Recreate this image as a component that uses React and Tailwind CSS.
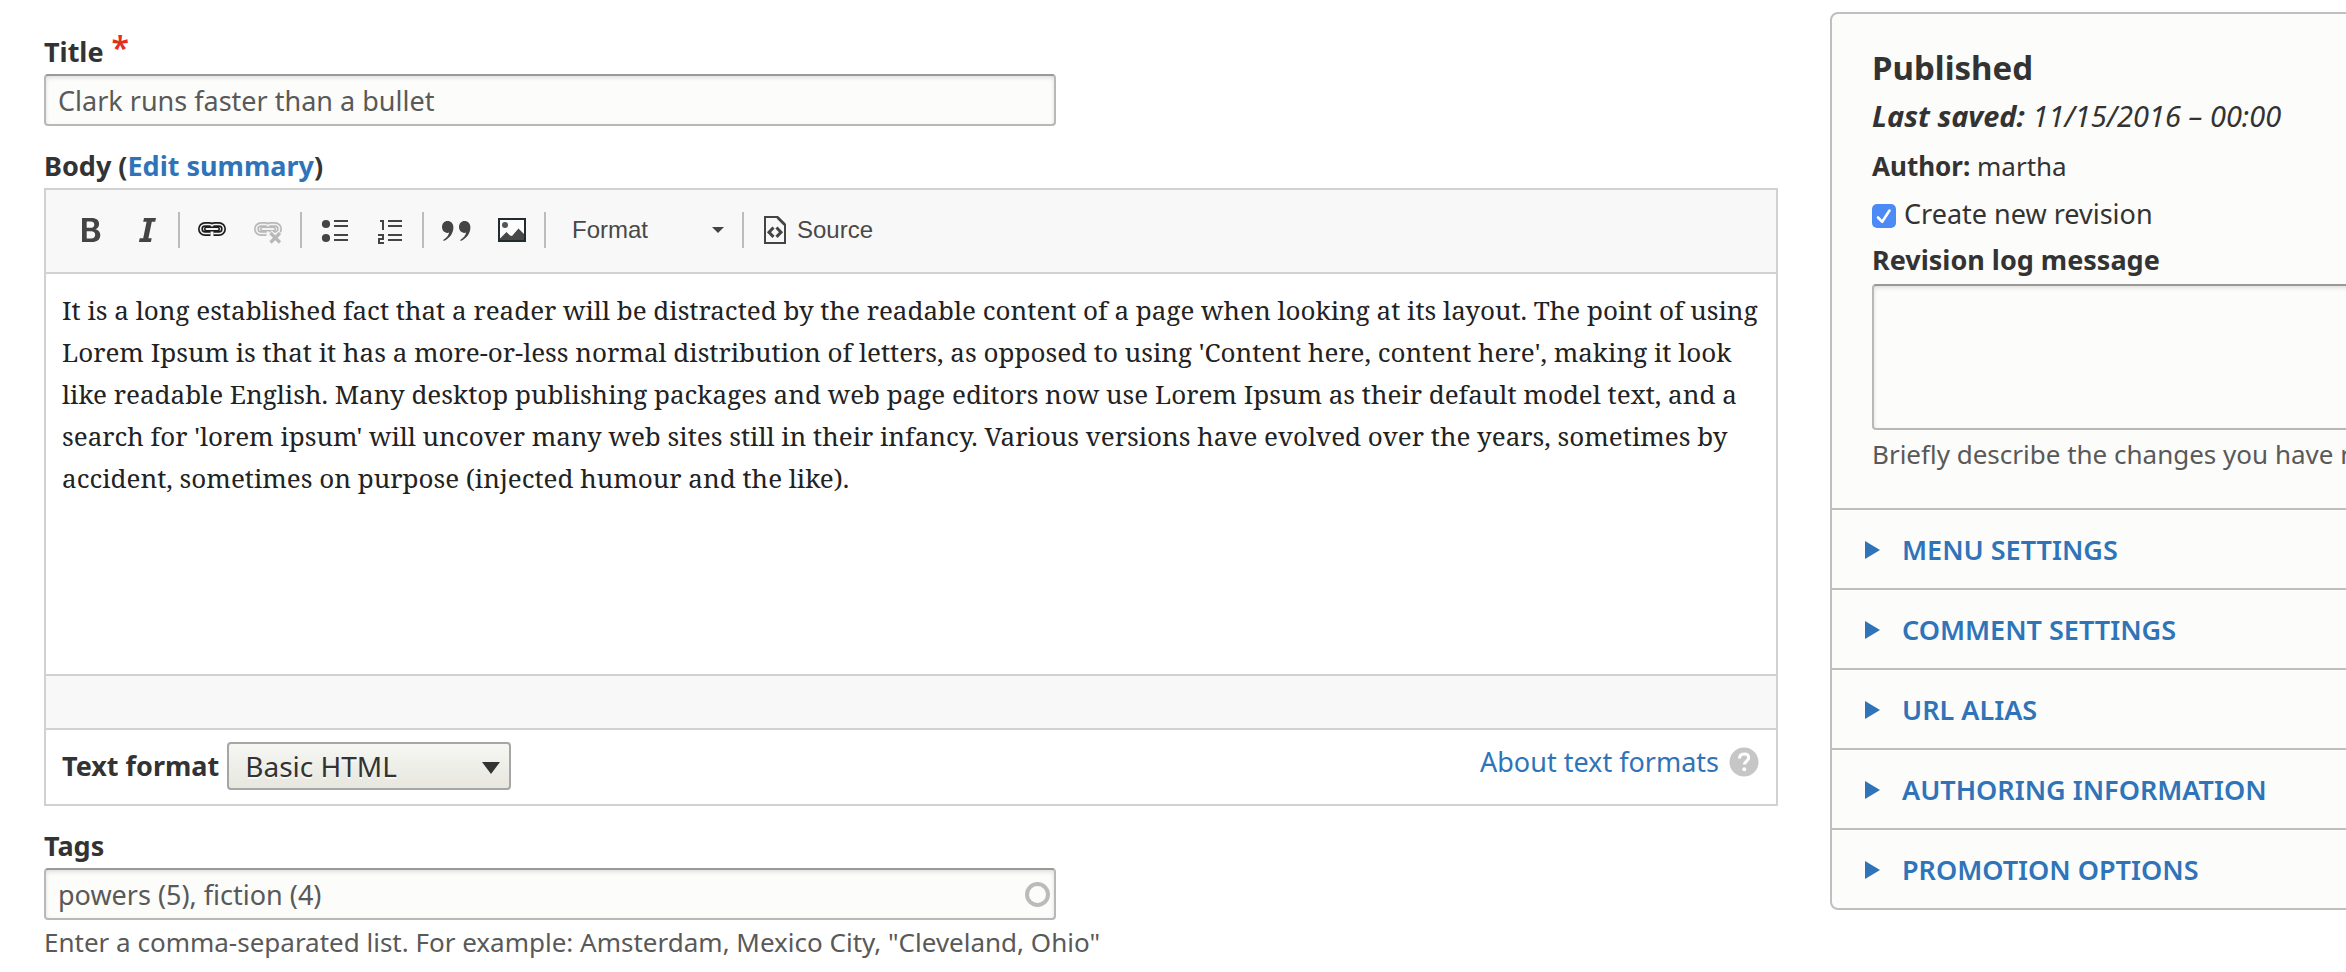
const BODY_TEXT = [
  "It is a long established fact that a reader will be distracted by the readable content of a page when looking at its layout. The point of using",
  "Lorem Ipsum is that it has a more-or-less normal distribution of letters, as opposed to using 'Content here, content here', making it look",
  "like readable English. Many desktop publishing packages and web page editors now use Lorem Ipsum as their default model text, and a",
  "search for 'lorem ipsum' will uncover many web sites still in their infancy. Various versions have evolved over the years, sometimes by",
  "accident, sometimes on purpose (injected humour and the like).",
].join("\n");

const SECTIONS = [
  "Menu settings",
  "Comment settings",
  "URL alias",
  "Authoring information",
  "Promotion options",
];

const FIELD =
  "block rounded border-2 border-[#b8b8b8] border-t-[#999] bg-[#fcfcfa] px-3 text-[#595959] shadow-[inset_0_2px_4px_rgba(0,0,0,0.12)] outline-none";

function BoldIcon() {
  return (
    <svg className="size-8" viewBox="0 0 32 32" fill="#444" fillRule="evenodd" aria-hidden="true">
      <path d="M8 4h9.500c5 0 7.600 2.300 7.600 6.100 0 2.500-1.400 4.500-3.700 5.200 3 .6 4.900 2.700 4.900 5.700 0 4.500-3.200 7-8.500 7H8zM12.700 7.600v6.200h4c2.300 0 3.600-1.100 3.600-3.100 0-2.100-1.300-3.100-3.700-3.100zM12.700 17.200v7.200h4.500c2.600 0 4-1.200 4-3.600 0-2.400-1.500-3.600-4.200-3.600z" />
    </svg>
  );
}

function ItalicIcon() {
  return (
    <svg className="size-8" viewBox="0 0 32 32" fill="#444" aria-hidden="true">
      <path d="M14 4h12l-.8 3.800h-3.400L18.400 24.200h3.300l-.8 3.800H8.900l.8-3.800h3.500L16.600 7.800h-3.400z" />
    </svg>
  );
}

const CHAIN =
  "M14.500 19.500H9a4.500 4.500 0 0 1 0-9h4.500c1.100 0 2 .5 2.500 1.300M17.500 19.500H23a4.500 4.500 0 0 0 0-9h-4.500c-1.100 0-2 .5-2.500 1.300";

function ChainLinks() {
  return (
    <g fill="none">
      <path d={CHAIN} stroke="currentColor" strokeWidth="5" />
      <path d={CHAIN} stroke="#f2f2f2" strokeWidth="1.700" />
      <path d="M10.500 15h11" stroke="currentColor" strokeWidth="5" strokeLinecap="round" />
      <path d="M10.500 15h11" stroke="#f2f2f2" strokeWidth="2" strokeLinecap="round" />
    </g>
  );
}

function LinkIcon() {
  return (
    <svg className="size-8 text-[#1c1c1c]" viewBox="0 0 32 32" aria-hidden="true">
      <ChainLinks />
    </svg>
  );
}

function UnlinkIcon() {
  return (
    <svg className="size-8 text-[#b8b8b8]" viewBox="0 0 32 32" aria-hidden="true">
      <ChainLinks />
      <path d="M18 18.500l10.500 10.500M28.500 18.500L18 29" stroke="#f8f8f8" strokeWidth="5.500" />
      <path d="M18.500 19l9.500 9.500M28 19l-9.500 9.500" stroke="#b8b8b8" strokeWidth="3.200" />
    </svg>
  );
}

function BulletListIcon() {
  return (
    <svg className="size-8" viewBox="0 0 32 32" fill="#444" aria-hidden="true">
      <circle cx="8" cy="10" r="4.100" />
      <circle cx="8" cy="24" r="4.100" />
      <path d="M16 6h14v2H16zM16 11h14v2H16zM16 20h14v2H16zM16 25h14v2H16z" />
    </svg>
  );
}

function NumberListIcon() {
  return (
    <svg className="size-8" viewBox="0 0 32 32" fill="#444" aria-hidden="true">
      <path d="M6 6h4v10H8V8H6z" />
      <path d="M4 20h6v6H6v2h4v2H4v-6h4v-2H4z" />
      <path d="M14 6h14v2H14zM14 11h14v2H14zM14 20h14v2H14zM14 25h14v2H14z" />
    </svg>
  );
}

function QuoteIcon() {
  return (
    <svg className="size-8" viewBox="0 0 32 32" fill="#444" aria-hidden="true">
      <path d="M7.500 7c3.600 0 5.900 2.500 5.900 6.300 0 6-3.600 11.200-9.600 13.700l-.6-1.100c3.500-2.200 5.400-4.500 5.900-7.300-.5.200-1.100.3-1.700.3C4.200 18.900 2 16.400 2 13.100 2 9.500 4.300 7 7.500 7z" />
      <path d="M24.500 7c3.600 0 5.900 2.500 5.900 6.300 0 6-3.600 11.200-9.600 13.700l-.6-1.100c3.500-2.200 5.400-4.500 5.900-7.300-.5.200-1.100.3-1.700.3-3.200 0-5.400-2.500-5.400-5.800C19 9.500 21.300 7 24.500 7z" />
    </svg>
  );
}

function ImageIcon() {
  return (
    <svg className="size-8" viewBox="0 0 32 32" aria-hidden="true">
      <rect x="3" y="5" width="26" height="22" fill="#fdfdfd" stroke="#222b2e" strokeWidth="2" />
      <circle cx="9" cy="11" r="3" fill="#555" />
      <path d="M4 26v-1.500l6.500-6.500 3.500 3.500 2 .5 6.500-7.500L28 20v6z" fill="#484848" />
    </svg>
  );
}

function SourceIcon() {
  return (
    <svg className="h-8 w-6" viewBox="0 0 24 32" fill="none" stroke="#444" strokeWidth="2" aria-hidden="true">
      <path d="M3 3h12.500L23 10.500V29H3z" />
      <path d="M15.500 3.500l7 7" strokeWidth="2.500" />
      <path d="M11.500 13.500L7 18.200l4.500 4.700M14.500 13.500l4.500 4.700-4.500 4.700" strokeWidth="3" />
    </svg>
  );
}

function ToolGroup({ tools }) {
  return (
    <div className="flex items-center">
      {tools.map(([name, Icon]) => (
        <button key={name} type="button" aria-label={name} className="flex h-12 w-14 items-center justify-center">
          <Icon />
        </button>
      ))}
      <span className="mx-1 h-9 w-0.5 bg-[#bcbcbc]" />
    </div>
  );
}

function Toolbar() {
  return (
    <div className="flex h-[84px] items-center border-b-2 border-[#d1d1d1] bg-[#f8f8f8] px-4 pb-0.5 font-['Liberation_Sans',sans-serif] text-2xl text-[#484848]">
      <ToolGroup tools={[["Bold", BoldIcon], ["Italic", ItalicIcon]]} />
      <ToolGroup tools={[["Link", LinkIcon], ["Unlink", UnlinkIcon]]} />
      <ToolGroup tools={[["Bulleted list", BulletListIcon], ["Numbered list", NumberListIcon]]} />
      <ToolGroup tools={[["Block quote", QuoteIcon], ["Image", ImageIcon]]} />
      <button type="button" className="ml-[22px] flex w-[152px] items-center justify-between">
        Format
        <svg className="h-1.5 w-3" viewBox="0 0 12 6" fill="#444" aria-hidden="true">
          <path d="M0 0h12L6 6z" />
        </svg>
      </button>
      <span className="ml-[18px] h-9 w-0.5 bg-[#bcbcbc]" />
      <button type="button" className="ml-[18px] flex items-center gap-[11px]">
        <SourceIcon />
        Source
      </button>
    </div>
  );
}

function FormatBar() {
  return (
    <div className="flex h-[74px] items-center justify-between px-4 pb-0.5">
      <div className="flex items-center gap-2">
        <label htmlFor="format" className="font-bold">
          Text format
        </label>
        <div className="relative">
          <select
            id="format"
            defaultValue="basic"
            className="block h-12 w-[284px] appearance-none rounded border-2 border-[#a6a6a6] bg-linear-to-b from-[#f6f6f3] to-[#e7e7df] pl-4 text-[28px] text-[#333] outline-none text-shadow-[0_2px_0_rgba(255,255,255,0.6)]"
          >
            <option value="basic">Basic HTML</option>
          </select>
          <svg className="pointer-events-none absolute top-5 right-[11px] h-3 w-[18px]" viewBox="0 0 18 12" fill="#333" aria-hidden="true">
            <path d="M0 0h18L9 12z" />
          </svg>
        </div>
      </div>
      <a href="#formats" className="mr-px flex items-center gap-2.5 pb-2 text-[#2f74b8]">
        About text formats
        <svg className="size-[30px]" viewBox="0 0 30 30" aria-hidden="true">
          <circle cx="15" cy="15" r="14.500" fill="#c6c6c6" />
          <path
            d="M10.500 11.500c0-3 1.900-4.600 4.700-4.600 2.700 0 4.500 1.500 4.500 3.900 0 3.300-4.300 3.500-4.300 6.700"
            fill="none"
            stroke="#fff"
            strokeWidth="3"
          />
          <circle cx="15.300" cy="22.300" r="2" fill="#fff" />
        </svg>
      </a>
    </div>
  );
}

function Sidebar() {
  return (
    <aside className="w-[596px] shrink-0 rounded-lg border-2 border-[#bfbfbf] bg-[#fcfcfa]">
      <div className="px-10 pt-[34px] pb-[38px]">
        <h3 className="text-[33px] leading-10 font-bold">Published</h3>
        <p className="mt-2.5 text-[29px] leading-9 italic">
          <strong>Last saved:</strong> 11/15/2016 – 00:00
        </p>
        <p className="mt-3.5 text-[26px] leading-9">
          <strong>Author:</strong> martha
        </p>
        <div className="mt-3 flex items-center gap-2">
          <span className="relative mt-1 flex">
            <input
              id="revision"
              type="checkbox"
              defaultChecked
              className="size-6 appearance-none rounded-[5px] bg-[#4c8bf5]"
            />
            <svg className="pointer-events-none absolute inset-0 size-6" viewBox="0 0 24 24" fill="none" stroke="#fff" strokeWidth="2.600" strokeLinecap="round" strokeLinejoin="round" aria-hidden="true">
              <path d="M6 13.500l4.200 4.300L17.500 6.500" />
            </svg>
          </span>
          <label htmlFor="revision">Create new revision</label>
        </div>
        <label htmlFor="log" className="mt-2.5 block font-bold">
          Revision log message
        </label>
        <textarea id="log" className={`${FIELD} mt-1.5 h-[146px] w-full resize-none`} />
        <p className="mt-2 text-[26px] leading-8 whitespace-nowrap text-[#595959]">
          Briefly describe the changes you have made.
        </p>
      </div>
      {SECTIONS.map((name) => (
        <button
          key={name}
          type="button"
          className="flex h-20 w-full items-center gap-[22px] border-t-2 border-[#bfbfbf] pt-0.5 pl-[33px] text-left font-semibold text-[#2f74b8] uppercase"
        >
          <svg className="h-[18px] w-[15px]" viewBox="0 0 15 18" fill="currentColor" aria-hidden="true">
            <path d="M0 0l15 9L0 18z" />
          </svg>
          {name}
        </button>
      ))}
    </aside>
  );
}

export default function App() {
  return (
    <div className="min-h-screen overflow-hidden bg-white font-['Noto_Sans',sans-serif] text-[27px] leading-9 text-[#333]">
      <div className="-mr-20 flex items-start gap-[52px] pt-3 pl-11">
        <main className="min-w-0 flex-1 pt-[22px]">
          <label htmlFor="title" className="flex items-start gap-2 font-bold">
            Title
            <span className="text-[32px] leading-7 font-semibold text-[#e0301e]">*</span>
          </label>
          <input id="title" type="text" defaultValue="Clark runs faster than a bullet" className={`${FIELD} mt-1 h-[52px] w-[1012px] max-w-full`} />

          <div className="mt-[22px] font-bold">
            <label htmlFor="body">Body</label> (
            <a href="#summary" className="text-[#2f74b8]">
              Edit summary
            </a>
            )
          </div>
          <div className="mt-1 border-2 border-[#d1d1d1]">
            <Toolbar />
            <textarea
              id="body"
              defaultValue={BODY_TEXT}
              className="block h-[400px] w-full resize-none bg-white px-4 py-[15px] font-['Noto_Serif','DejaVu_Serif',serif] text-[26px] leading-[42px] text-[#222] outline-none"
            />
            <div className="h-14 border-y-2 border-[#d1d1d1] bg-[#f8f8f8]" />
            <FormatBar />
          </div>

          <label htmlFor="tags" className="mt-[22px] block font-bold">
            Tags
          </label>
          <div className="relative mt-1 w-[1012px] max-w-full">
            <input id="tags" type="text" defaultValue="powers (5), fiction (4)" className={`${FIELD} h-[52px] w-full`} />
            <span className="absolute top-3.5 right-1.5 size-[25px] rounded-full border-4 border-[#bbb]" />
          </div>
          <p className="mt-1.5 text-[26px] leading-8 text-[#595959]">
            Enter a comma-separated list. For example: Amsterdam, Mexico City, "Cleveland, Ohio"
          </p>
        </main>
        <Sidebar />
      </div>
    </div>
  );
}
